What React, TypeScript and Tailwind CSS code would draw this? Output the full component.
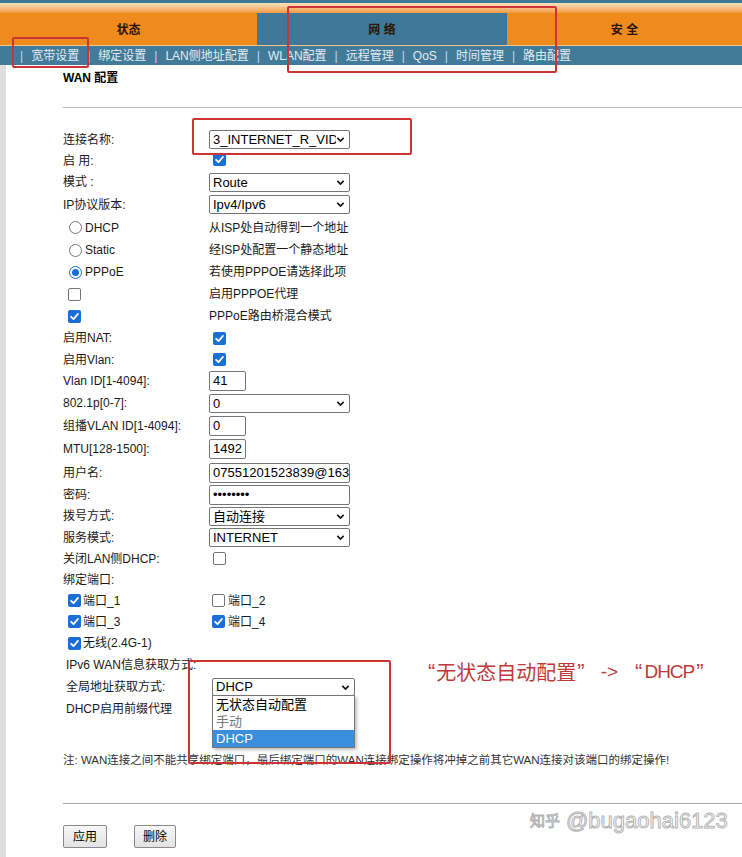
import React from "react";

const FONT = "font-['Liberation_Sans','Noto_Sans_CJK_SC',sans-serif]";

function Check({ on }: { on: boolean }) {
  if (!on) return <span className="inline-block w-[13px] h-[13px] rounded-[2px] border border-[#767676] bg-white shrink-0" />;
  return (
    <span className="inline-flex w-[13px] h-[13px] rounded-[2px] bg-[#1a6fd6] items-center justify-center shrink-0">
      <svg viewBox="0 0 12 12" className="w-[11px] h-[11px]">
        <path d="M2.3 6.3 4.9 8.8 9.8 3.2" stroke="white" strokeWidth="1.9" fill="none" strokeLinecap="round" strokeLinejoin="round" />
      </svg>
    </span>
  );
}

function Radio({ on }: { on: boolean }) {
  if (!on) return <span className="inline-block w-[13px] h-[13px] rounded-full border border-[#767676] bg-white shrink-0" />;
  return (
    <span className="inline-flex w-[13px] h-[13px] rounded-full border border-[#1a6fd6] bg-white items-center justify-center shrink-0">
      <span className="w-[7px] h-[7px] rounded-full bg-[#1a6fd6]" />
    </span>
  );
}

function Chevron() {
  return (
    <svg viewBox="0 0 10 10" className="w-[9px] h-[9px] shrink-0">
      <path d="M1.5 3.2 5 6.7 8.5 3.2" stroke="#111" strokeWidth="1.8" fill="none" />
    </svg>
  );
}

function Select({ value }: { value: string }) {
  return (
    <div className="w-[141px] h-[19px] border border-[#767676] rounded-[2px] bg-white flex items-center pl-[3px] pr-[4px] text-[13px] leading-[17px] text-black">
      <span className="flex-1 overflow-hidden whitespace-nowrap">{value}</span>
      <Chevron />
    </div>
  );
}

function Input({ value, wide }: { value: string; wide?: boolean }) {
  return (
    <div className={`${wide ? "w-[141px]" : "w-[37px]"} h-[20px] border border-[#767676] rounded-[2px] bg-white flex items-center pl-[3px] text-[13px] leading-[18px] overflow-hidden whitespace-nowrap text-black`}>
      {value}
    </div>
  );
}

function Row({ h, label, children }: { h: string; label?: React.ReactNode; children?: React.ReactNode }) {
  return (
    <div className={`flex items-center ${h}`}>
      <div className="w-[146px] shrink-0 flex items-center">{label}</div>
      <div className="flex items-center">{children}</div>
    </div>
  );
}

const SUBNAV = ["宽带设置", "绑定设置", "LAN侧地址配置", "WLAN配置", "远程管理", "QoS", "时间管理", "路由配置"];

export default function App() {
  return (
    <div className={`relative w-[742px] h-[857px] overflow-hidden bg-white text-[12px] text-[#1a1a1a] ${FONT}`}>
      {/* top navigation */}
      <div className="h-[3px] bg-[#3f7797]" />
      <div className="h-[10px] bg-gradient-to-b from-[#fbe3c0] to-[#f29a3a]" />
      <div className="flex h-[32px] font-bold text-[12px] text-[#2a1608]">
        <div className="w-[257px] bg-[#ef8a1d] flex items-center justify-center pt-[2px]">状态</div>
        <div className="w-[250px] bg-[#3f7898] flex items-center justify-center pt-[2px]">网 络</div>
        <div className="flex-1 bg-[#ef8a1d] flex items-center justify-center pt-[2px]">安 全</div>
      </div>
      <div className="h-[20px] bg-[#427b9a] border-t border-[#f6c58c] flex items-center pl-[20px] text-[#e3ebf0] text-[12px]">
        {SUBNAV.map((s) => (
          <React.Fragment key={s}>
            <span className="text-[#c9d8e2]">|</span>
            <span className="px-[8px]">{s}</span>
          </React.Fragment>
        ))}
      </div>

      <div className="flex">
        <div className="w-[6px] shrink-0 bg-[#dedede] h-[792px]" />
        <div className="flex-1 pl-[57px]">
          <div className="mt-[5px] leading-[16px] font-bold text-[12px] text-black">WAN 配置</div>
          <div className="mt-[21px] border-t border-[#bdbdbd]" />

          <div className="mt-[21px]">
            <Row h="h-[21px]" label="连接名称:"><Select value="3_INTERNET_R_VID" /></Row>
            <Row h="h-[21px]" label="启 用:"><span className="ml-[4px]"><Check on /></span></Row>
            <Row h="h-[22px]" label="模式 :"><Select value="Route" /></Row>
            <Row h="h-[23px]" label="IP协议版本:"><Select value="Ipv4/Ipv6" /></Row>
            <Row h="h-[23px]" label={<span className="flex items-center gap-[3px] ml-[6px]"><Radio on={false} /><span>DHCP</span></span>}>从ISP处自动得到一个地址</Row>
            <Row h="h-[22px]" label={<span className="flex items-center gap-[3px] ml-[6px]"><Radio on={false} /><span>Static</span></span>}>经ISP处配置一个静态地址</Row>
            <Row h="h-[22px]" label={<span className="flex items-center gap-[3px] ml-[6px]"><Radio on /><span>PPPoE</span></span>}>若使用PPPOE请选择此项</Row>
            <Row h="h-[22px]" label={<span className="ml-[5px] flex"><Check on={false} /></span>}>启用PPPOE代理</Row>
            <Row h="h-[22px]" label={<span className="ml-[5px] flex"><Check on /></span>}>PPPoE路由桥混合模式</Row>
            <Row h="h-[22px]" label="启用NAT:"><span className="ml-[4px] flex"><Check on /></span></Row>
            <Row h="h-[21px]" label="启用Vlan:"><span className="ml-[4px] flex"><Check on /></span></Row>
            <Row h="h-[22px]" label="Vlan ID[1-4094]:"><Input value="41" /></Row>
            <Row h="h-[22px]" label="802.1p[0-7]:"><Select value="0" /></Row>
            <Row h="h-[23px]" label="组播VLAN ID[1-4094]:"><Input value="0" /></Row>
            <Row h="h-[24px]" label="MTU[128-1500]:"><Input value="1492" /></Row>
            <Row h="h-[23px]" label="用户名:"><Input wide value="07551201523839@163.gd" /></Row>
            <Row h="h-[21px]" label="密码:"><Input wide value="••••••••" /></Row>
            <Row h="h-[22px]" label="拨号方式:"><Select value="自动连接" /></Row>
            <Row h="h-[21px]" label="服务模式:"><Select value="INTERNET" /></Row>
            <Row h="h-[21px]" label="关闭LAN侧DHCP:"><span className="ml-[4px] flex"><Check on={false} /></span></Row>
            <Row h="h-[21px]" label="绑定端口:" />
            <Row h="h-[21px]" label={<span className="flex items-center gap-[2px] ml-[5px]"><Check on /><span>端口_1</span></span>}><span className="flex items-center gap-[3px] ml-[3px]"><Check on={false} /><span>端口_2</span></span></Row>
            <Row h="h-[21px]" label={<span className="flex items-center gap-[2px] ml-[5px]"><Check on /><span>端口_3</span></span>}><span className="flex items-center gap-[3px] ml-[3px]"><Check on /><span>端口_4</span></span></Row>
            <Row h="h-[22px]" label={<span className="flex items-center gap-[2px] ml-[5px] whitespace-nowrap"><Check on /><span>无线(2.4G-1)</span></span>} />
            <div className="h-[22px] flex items-center pl-[3px]">IPv6 WAN信息获取方式:</div>
            <Row h="h-[22px]" label={<span className="pl-[3px]">全局地址获取方式:</span>}>
              <div className="relative ml-[3px]">
                <div className="w-[143px] h-[18px] border border-[#767676] rounded-[2px] bg-white flex items-center pl-[3px] pr-[4px] text-[13px] leading-[16px] text-black">
                  <span className="flex-1">DHCP</span>
                  <Chevron />
                </div>
                <div className="absolute left-0 top-[17px] w-[143px] border border-[#767676] bg-white shadow-[2px_2px_3px_rgba(0,0,0,0.25)] text-[13px] leading-[17px] z-10">
                  <div className="pl-[3px] text-black">无状态自动配置</div>
                  <div className="pl-[3px] text-[#777]">手动</div>
                  <div className="pl-[3px] bg-[#3b8edb] text-white">DHCP</div>
                </div>
              </div>
            </Row>
            <div className="h-[22px] flex items-center pl-[3px]">DHCP启用前缀代理</div>
          </div>

          <div className="mt-[32px] leading-[16px] text-[11.5px] text-[#333] whitespace-nowrap">
            注: WAN连接之间不能共享绑定端口，最后绑定端口的WAN连接绑定操作将冲掉之前其它WAN连接对该端口的绑定操作!
          </div>
          <div className="mt-[35px] border-t border-[#a9a9a9]" />
          <div className="mt-[21px] flex gap-[27px]">
            <button className="w-[44px] h-[23px] border border-[#8a8a8a] rounded-[2px] bg-gradient-to-b from-[#f7f7f7] to-[#e3e3e3] text-[12px] text-black">应用</button>
            <button className="w-[42px] h-[23px] border border-[#8a8a8a] rounded-[2px] bg-gradient-to-b from-[#f7f7f7] to-[#e3e3e3] text-[12px] text-black">删除</button>
          </div>
        </div>
      </div>

      {/* red annotation boxes drawn over the page */}
      <div className="absolute left-[12px] top-[37px] w-[77px] h-[31px] border-2 border-[#cc3535] rounded-[2px]" />
      <div className="absolute left-[287px] top-[6px] w-[270px] h-[67px] border-2 border-[#cc3535] rounded-[2px]" />
      <div className="absolute left-[192px] top-[118px] w-[220px] h-[37px] border-2 border-[#cc3535] rounded-[2px]" />
      <div className="absolute left-[188px] top-[660px] w-[203px] h-[104px] border-2 border-[#cc3535] rounded-[2px] z-20" />
      <div className="absolute left-[428px] top-[659px] flex items-center text-[#c0393a] whitespace-nowrap leading-[26px]">
        <span className="text-[22px] font-['Liberation_Sans',sans-serif]">“</span>
        <span className="text-[20px] font-['Noto_Sans_CJK_SC',sans-serif] ml-[1px]">无状态自动配置</span>
        <span className="text-[22px] font-['Liberation_Sans',sans-serif] ml-[1px]">”</span>
        <span className="text-[19px] font-['Liberation_Sans',sans-serif] ml-[16px]">-&gt;</span>
        <span className="text-[22px] font-['Liberation_Sans',sans-serif] ml-[17px]">“</span>
        <span className="text-[19px] font-['Liberation_Sans',sans-serif] tracking-[-1px] ml-[2px]">DHCP</span>
        <span className="text-[22px] font-['Liberation_Sans',sans-serif] ml-[2px]">”</span>
      </div>

      {/* watermark */}
      <div className="absolute left-[530px] top-[806px] flex items-end text-transparent [-webkit-text-stroke:1px_#b5b5b5] whitespace-nowrap leading-[28px]">
        <span className="text-[15px] font-['Noto_Sans_CJK_SC',sans-serif] mb-[1px]">知乎</span>
        <span className="text-[22px] font-['Liberation_Sans',sans-serif] ml-[6px]">@bugaohai6123</span>
      </div>
    </div>
  );
}
